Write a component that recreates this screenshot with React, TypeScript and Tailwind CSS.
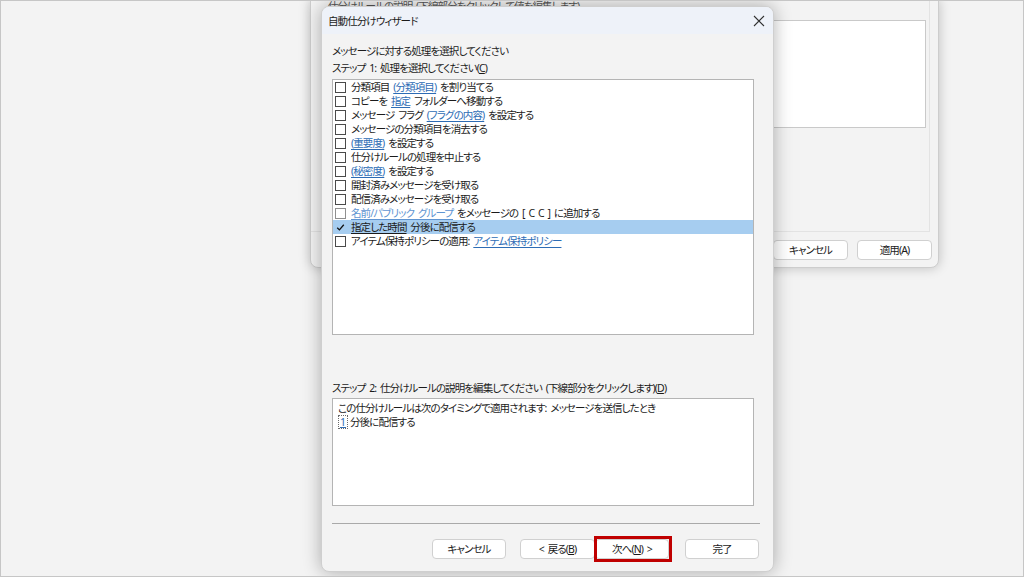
import React from "react";

const FONT =
  "font-['Noto_Sans','Noto_Sans_CJK_JP',sans-serif] [font-feature-settings:'palt'] tracking-[-0.9px] [word-spacing:2px]";
const LINK = "text-[#2d6cb5] underline underline-offset-[2px] decoration-[#2d6cb5]";

function CheckBox({ checked = false, dim = false }: { checked?: boolean; dim?: boolean }) {
  return (
    <div
      className={`w-[11px] h-[11px] shrink-0 flex items-center justify-center border ${
        checked ? "border-transparent" : dim ? "border-[#8f8f8f] bg-white" : "border-[#4a4a4a] bg-white"
      }`}
    >
      {checked && (
        <svg width="11" height="11" viewBox="0 0 11 11">
          <path d="M1.5 5.8 L4.2 8.4 L9.5 2.2" fill="none" stroke="#111" strokeWidth="1.6" />
        </svg>
      )}
    </div>
  );
}

function Row({
  children,
  checked = false,
  selected = false,
  dim = false,
}: {
  children: React.ReactNode;
  checked?: boolean;
  selected?: boolean;
  dim?: boolean;
}) {
  return (
    <div
      className={`h-[14px] flex items-center pl-[2px] gap-[5px] whitespace-nowrap ${
        selected ? "bg-[#a6cdf0]" : ""
      }`}
    >
      <CheckBox checked={checked} dim={dim} />
      <span>{children}</span>
    </div>
  );
}

function Btn({ children, className = "" }: { children: React.ReactNode; className?: string }) {
  return (
    <div
      className={`h-[20px] bg-white border border-[#d0d0d0] rounded-[4px] flex items-center justify-center text-[10.5px] text-[#1b1b1b] ${className}`}
    >
      {children}
    </div>
  );
}

export default function App() {
  return (
    <div
      className={`${FONT} relative w-[1024px] h-[577px] overflow-hidden bg-[#f3f3f3] border border-[#c6c6c6] text-[10.5px] leading-[14px] text-[#1b1b1b]`}
    >
      {/* background window */}
      <div className="absolute left-[309px] top-[-1px] w-[629px] h-[268px] bg-[#f3f3f3] border border-[#cdcdcd] rounded-b-[8px] shadow-[0_0_12px_rgba(0,0,0,0.22)] flex flex-col">
        <div className="h-[231px] mr-[8px] border-r border-b border-[#e3e3e3] flex flex-col">
          <div className="mt-[-2px] pl-[17px] text-[#555] whitespace-nowrap">
            仕分けルールの説明 (下線部分をクリックして値を編集します)
          </div>
          <div className="mt-[7px] ml-[17px] mr-[3px] h-[108px] bg-white border border-[#c9c9c9]" />
        </div>
        <div className="mt-[8px] flex justify-end gap-[9px] pr-[6px]">
          <Btn className="w-[75px]">キャンセル</Btn>
          <Btn className="w-[75px]">適用(A)</Btn>
        </div>
      </div>

      {/* main dialog */}
      <div className="absolute left-[320px] top-[5px] w-[453px] h-[566px] bg-[#f3f3f3] rounded-[8px] border border-[#cfcfcf] shadow-[0_0_18px_rgba(0,0,0,0.3)] overflow-hidden flex flex-col">
        <div className="h-[27px] shrink-0 bg-[#eef2f9] flex items-center justify-between pl-[6px] pr-[7px]">
          <span>自動仕分けウィザード</span>
          <svg width="12" height="12" viewBox="0 0 12 12" className="mr-[1px]">
            <path d="M1 1 L11 11 M11 1 L1 11" stroke="#333" strokeWidth="1.1" fill="none" />
          </svg>
        </div>

        <div className="flex flex-col pl-[10px]">
          <div className="mt-[10px] whitespace-nowrap">メッセージに対する処理を選択してください</div>
          <div className="mt-[3px] whitespace-nowrap">
            ステップ 1: 処理を選択してください(<span className="underline">C</span>)
          </div>

          <div className="mt-[4px] w-[422px] h-[256px] bg-white border border-[#b4b4b4] flex flex-col">
            <Row>
              分類項目 <span className={LINK}>(分類項目)</span> を割り当てる
            </Row>
            <Row>
              コピーを <span className={LINK}>指定</span> フォルダーへ移動する
            </Row>
            <Row>
              メッセージ フラグ <span className={LINK}>(フラグの内容)</span> を設定する
            </Row>
            <Row>メッセージの分類項目を消去する</Row>
            <Row>
              <span className={LINK}>(重要度)</span> を設定する
            </Row>
            <Row>仕分けルールの処理を中止する</Row>
            <Row>
              <span className={LINK}>(秘密度)</span> を設定する
            </Row>
            <Row>開封済みメッセージを受け取る</Row>
            <Row>配信済みメッセージを受け取る</Row>
            <Row dim>
              <span className="text-[#5f95d2] underline underline-offset-[2px]">名前/パブリック グループ</span>{" "}
              をメッセージの [ C C ] に追加する
            </Row>
            <Row checked selected>
              <span className="underline underline-offset-[2px]">指定した時間</span> 分後に配信する
            </Row>
            <Row>
              アイテム保持ポリシーの適用: <span className={LINK}>アイテム保持ポリシー</span>
            </Row>
          </div>

          <div className="mt-[46px] whitespace-nowrap">
            ステップ 2: 仕分けルールの説明を編集してください (下線部分をクリックします)(
            <span className="underline">D</span>)
          </div>
          <div className="mt-[3px] w-[422px] h-[108px] bg-white border border-[#b4b4b4] px-[5px] pt-[2px] flex flex-col">
            <div className="whitespace-nowrap">
              この仕分けルールは次のタイミングで適用されます: メッセージを送信したとき
            </div>
            <div className="whitespace-nowrap flex items-center">
              <span className="border border-dotted border-[#6b6b6b] px-[1px] leading-[12px] text-[#2d6cb5] underline tracking-normal">
                1
              </span>
              <span className="ml-[2px]">分後に配信する</span>
            </div>
          </div>

          <div className="mt-[17px] w-[428px] h-px bg-[#a9a9a9]" />

          <div className="mt-[15px] w-[427px] flex justify-end">
            <Btn className="w-[74px]">キャンセル</Btn>
            <Btn className="w-[75px] ml-[14px]">
              &lt; 戻る(<span className="underline">B</span>)
            </Btn>
            <div className="relative">
              <Btn className="w-[74px] border-[#005fb8]">
                次へ(<span className="underline">N</span>) &gt;
              </Btn>
              <div className="absolute left-[-1px] right-[-3px] top-[-3px] bottom-[-3px] border-[3px] border-[#c00000]" />
            </div>
            <Btn className="w-[74px] ml-[16px]">完了</Btn>
          </div>
        </div>
      </div>
    </div>
  );
}
